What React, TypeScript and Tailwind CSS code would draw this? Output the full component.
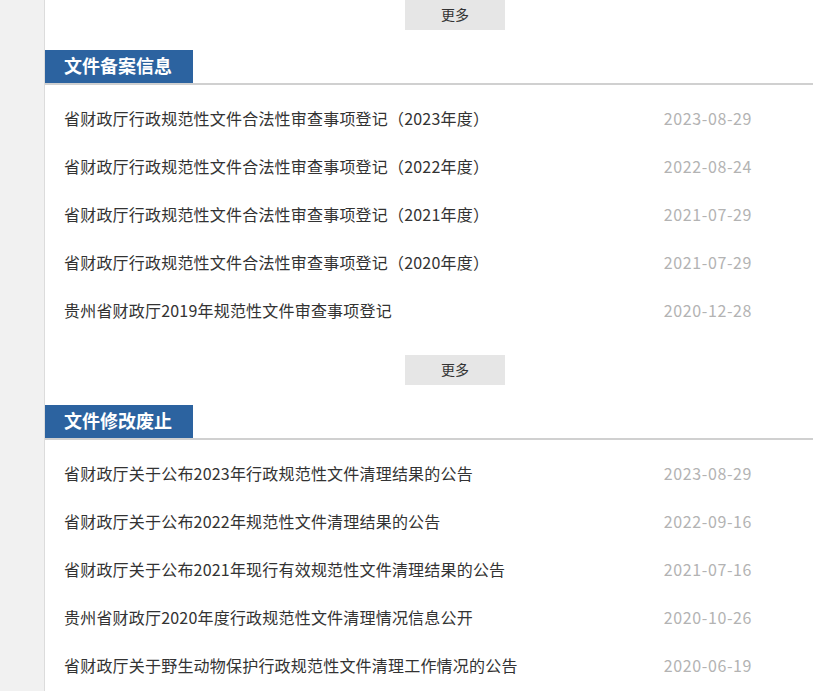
import React from 'react';

const sections = [
  {
    title: '文件备案信息',
    items: [
      { text: '省财政厅行政规范性文件合法性审查事项登记（2023年度）', date: '2023-08-29' },
      { text: '省财政厅行政规范性文件合法性审查事项登记（2022年度）', date: '2022-08-24' },
      { text: '省财政厅行政规范性文件合法性审查事项登记（2021年度）', date: '2021-07-29' },
      { text: '省财政厅行政规范性文件合法性审查事项登记（2020年度）', date: '2021-07-29' },
      { text: '贵州省财政厅2019年规范性文件审查事项登记', date: '2020-12-28' },
    ],
  },
  {
    title: '文件修改废止',
    items: [
      { text: '省财政厅关于公布2023年行政规范性文件清理结果的公告', date: '2023-08-29' },
      { text: '省财政厅关于公布2022年规范性文件清理结果的公告', date: '2022-09-16' },
      { text: '省财政厅关于公布2021年现行有效规范性文件清理结果的公告', date: '2021-07-16' },
      { text: '贵州省财政厅2020年度行政规范性文件清理情况信息公开', date: '2020-10-26' },
      { text: '省财政厅关于野生动物保护行政规范性文件清理工作情况的公告', date: '2020-06-19' },
    ],
  },
];

const MoreButton: React.FC = () => (
  <div className="ml-[360px] w-[100px] h-[30px] bg-[#e6e6e6] text-[#333] text-[14px] leading-[29px] text-center cursor-pointer">
    更多
  </div>
);

const App: React.FC = () => {
  return (
    <div
      className="flex min-h-[691px] h-[691px] overflow-hidden bg-white"
      style={{ fontFamily: '"Microsoft YaHei", "Noto Sans CJK SC", "Noto Sans", sans-serif' }}
    >
      <aside className="w-[45px] shrink-0 bg-[#f1f1f1] border-r border-[#dcdcdc]" />
      <main className="flex-1 min-w-0">
        <MoreButton />
        {sections.map((sec) => (
          <section key={sec.title} className="mt-[20px]">
            <div className="border-b-2 border-[#d0d0d0]">
              <h2 className="w-[148px] h-[33px] bg-[#2c63a0] text-white text-[18px] font-bold leading-[31px] pl-[19px]">
                {sec.title}
              </h2>
            </div>
            <ul className="pt-[10px] mb-[20px]">
              {sec.items.map((item, idx) => (
                <li key={idx} className="h-[48px] flex items-center justify-between pl-[19px] pr-[61px] pb-[2px] text-[16px]">
                  <span className="text-[#333] tracking-[0.2px]">{item.text}</span>
                  <span className="text-[#b3b3b3] tracking-[0.6px]">{item.date}</span>
                </li>
              ))}
            </ul>
            {sec.title === '文件备案信息' && <MoreButton />}
          </section>
        ))}
      </main>
    </div>
  );
};

export default App;
